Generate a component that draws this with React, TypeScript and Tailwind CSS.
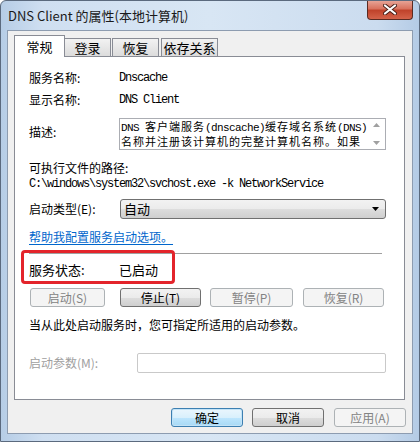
import React from 'react';

const mono = "font-['Liberation_Mono','Noto_Sans_CJK_SC',monospace] text-[12px] tracking-[-1.2px]";
const lat = "font-['Liberation_Mono',monospace] tracking-[-0.6px]";

const Tab: React.FC<{ label: string; active?: boolean; className?: string }> = ({ label, active, className }) =>
    active ? (
        <div className={`relative z-10 -mb-px flex h-[22px] items-start justify-center border border-b-0 border-[#898c95] bg-white pt-[1px] text-[13px] ${className ?? ''}`}>
            {label}
        </div>
    ) : (
        <div className={`flex h-[18px] items-center justify-center border border-b-0 border-[#898c95] bg-[linear-gradient(180deg,#f2f2f2,#dcdcdc)] text-[13px] ${className ?? ''}`}>
            {label}
        </div>
    );

const Btn: React.FC<{ label: string; w: string; disabled?: boolean; primary?: boolean; className?: string }> = ({ label, w, disabled, primary, className }) => {
    let look = 'border-[#707070] bg-[linear-gradient(180deg,#f2f2f2_0%,#ebebeb_50%,#dddddd_51%,#cfcfcf_100%)] text-black';
    if (disabled) look = 'border-[#adb2b5] bg-[#f4f4f4] text-[#838383]';
    if (primary) look = 'border-[#3c7fb1] bg-[linear-gradient(180deg,#eaf6fd_0%,#d9f0fc_50%,#bee6fd_51%,#a7d9f5_100%)] shadow-[inset_0_0_0_1px_#c3e3f7] text-black';
    return (
        <div className={`flex h-[19px] items-center justify-center rounded-[3px] border text-[12px] ${look} ${w} ${className ?? ''}`}>
            {label}
        </div>
    );
};

export default function App() {
    return (
        <div className="relative flex h-[442px] w-[420px] flex-col overflow-hidden rounded-t-[6px] border border-[#5b6a7e] bg-[linear-gradient(90deg,#b6cde6,#cfdff1_10%,#d8e6f4_50%,#cbdcef_90%,#b4cbe5)] font-['Noto_Sans_CJK_SC','Microsoft_YaHei',sans-serif] text-black">
            {/* title bar */}
            <div className="flex h-[29px] shrink-0 items-center pl-[7px] text-[13px] text-[#1a1a1a]">
                DNS Client 的属性(本地计算机)
            </div>
            <div className="absolute right-[6px] top-[-1px] flex h-[20px] w-[46px] items-center justify-center rounded-b-[4px] border border-t-0 border-[#5a2b22] bg-[linear-gradient(180deg,#e9a99c_0%,#d9735f_45%,#c0432b_55%,#d4634a_100%)]">
                <svg width="14" height="11" viewBox="0 0 14 11">
                    <path d="M2 1.5 L12 9.5 M12 1.5 L2 9.5" stroke="#4a2018" strokeWidth="4" strokeLinecap="round" />
                    <path d="M2 1.5 L12 9.5 M12 1.5 L2 9.5" stroke="#ffffff" strokeWidth="2.2" strokeLinecap="round" />
                </svg>
            </div>

            {/* client area */}
            <div className="mx-[6px] flex h-[404px] shrink-0 flex-col border border-[#8d9cb0] bg-[#f0f0f0]">
                <div className="flex h-[25px] items-end pl-[6px] pt-[4px]">
                    <Tab label="常规" active className="w-[51px]" />
                    <Tab label="登录" className="w-[47px] -ml-px" />
                    <Tab label="恢复" className="ml-px w-[47px]" />
                    <Tab label="依存关系" className="ml-[2px] w-[57px]" />
                </div>

                <div className="relative ml-[6px] flex h-[344px] w-[391px] flex-col border border-[#898c95] bg-white pl-[14px] text-[12px]">
                    <div className="mt-[13px] flex h-[16px] items-center">
                        <span className="w-[90px]">服务名称:</span>
                        <span className={mono}>Dnscache</span>
                    </div>
                    <div className="mt-[6px] flex h-[16px] items-center">
                        <span className="w-[90px]">显示名称:</span>
                        <span className={mono}>DNS Client</span>
                    </div>
                    <div className="mt-[10px] flex items-start">
                        <span className="mt-[5px] w-[90px]">描述:</span>
                        <div className="flex h-[32px] w-[267px] border border-[#abadb3] bg-white">
                            <div className="flex-1 pl-[1px] text-[11px] leading-[15px] tracking-[1px]">
                                <div className="h-[15px] whitespace-nowrap">
                                    <span className={lat}>DNS </span>客户端服务<span className={lat}>(dnscache)</span>缓存域名系统<span className={lat}>(DNS)</span>
                                </div>
                                <div className="h-[15px] whitespace-nowrap">名称并注册该计算机的完整计算机名称。如果</div>
                            </div>
                            <div className="flex w-[17px] flex-col items-center justify-between py-[4px]">
                                <svg width="7" height="4" viewBox="0 0 7 4"><path d="M0 4 L3.5 0 L7 4 Z" fill="#a0a0a0" /></svg>
                                <svg width="7" height="4" viewBox="0 0 7 4"><path d="M0 0 L3.5 4 L7 0 Z" fill="#a0a0a0" /></svg>
                            </div>
                        </div>
                    </div>
                    <div className="mt-[10px] flex h-[16px] items-center">可执行文件的路径:</div>
                    <div className={`flex h-[16px] items-center whitespace-nowrap ${mono}`}>C:\windows\system32\svchost.exe -k NetworkService</div>

                    <div className="mt-[7px] flex items-center">
                        <span className="w-[91px]">启动类型(E):</span>
                        <div className="flex h-[20px] w-[266px] items-center justify-between rounded-[3px] border border-[#707070] bg-[linear-gradient(180deg,#f2f2f2_0%,#ebebeb_50%,#dddddd_51%,#cfcfcf_100%)] pl-[3px] pr-[6px]">
                            <span className="text-[13px]">自动</span>
                            <svg width="7" height="4" viewBox="0 0 7 4"><path d="M0 0 L3.5 4 L7 0 Z" fill="#000" /></svg>
                        </div>
                    </div>

                    <div className="mt-[10px] flex h-[16px] items-center">
                        <span className="text-[#0066cc] underline underline-offset-2">帮助我配置服务启动选项。</span>
                    </div>
                    <div className="mt-[8px] h-px w-[353px] bg-[#a0a0a0]" />

                    <div className="mt-[8px] flex h-[16px] items-center text-[13px]">
                        <span className="w-[90px]">服务状态:</span>
                        <span>已启动</span>
                    </div>

                    <div className="mt-[10px] flex items-center">
                        <Btn label="启动(S)" w="w-[75px]" disabled className="ml-[1px]" />
                        <Btn label="停止(T)" w="w-[81px]" className="ml-[15px]" />
                        <Btn label="暂停(P)" w="w-[83px]" disabled className="ml-[9px]" />
                        <Btn label="恢复(R)" w="w-[81px]" disabled className="ml-[10px]" />
                    </div>

                    <div className="mt-[10px] flex h-[16px] items-center">当从此处启动服务时，您可指定所适用的启动参数。</div>

                    <div className="mt-[20px] flex items-center">
                        <span className="w-[108px] text-[#a0a0a0]">启动参数(M):</span>
                        <div className="h-[20px] w-[249px] rounded-[2px] border border-[#c9c9c9] bg-white" />
                    </div>

                    <div className="pointer-events-none absolute left-[6px] top-[193px] h-[34px] w-[154px] rounded-[4px] border-[3px] border-[#e3242b]" />
                </div>

                <div className="mt-[8px] flex justify-end pr-[6px]">
                    <Btn label="确定" w="w-[72px]" primary />
                    <Btn label="取消" w="w-[72px]" className="ml-[9px]" />
                    <Btn label="应用(A)" w="w-[72px]" disabled className="ml-[10px]" />
                </div>
            </div>
        </div>
    );
}
